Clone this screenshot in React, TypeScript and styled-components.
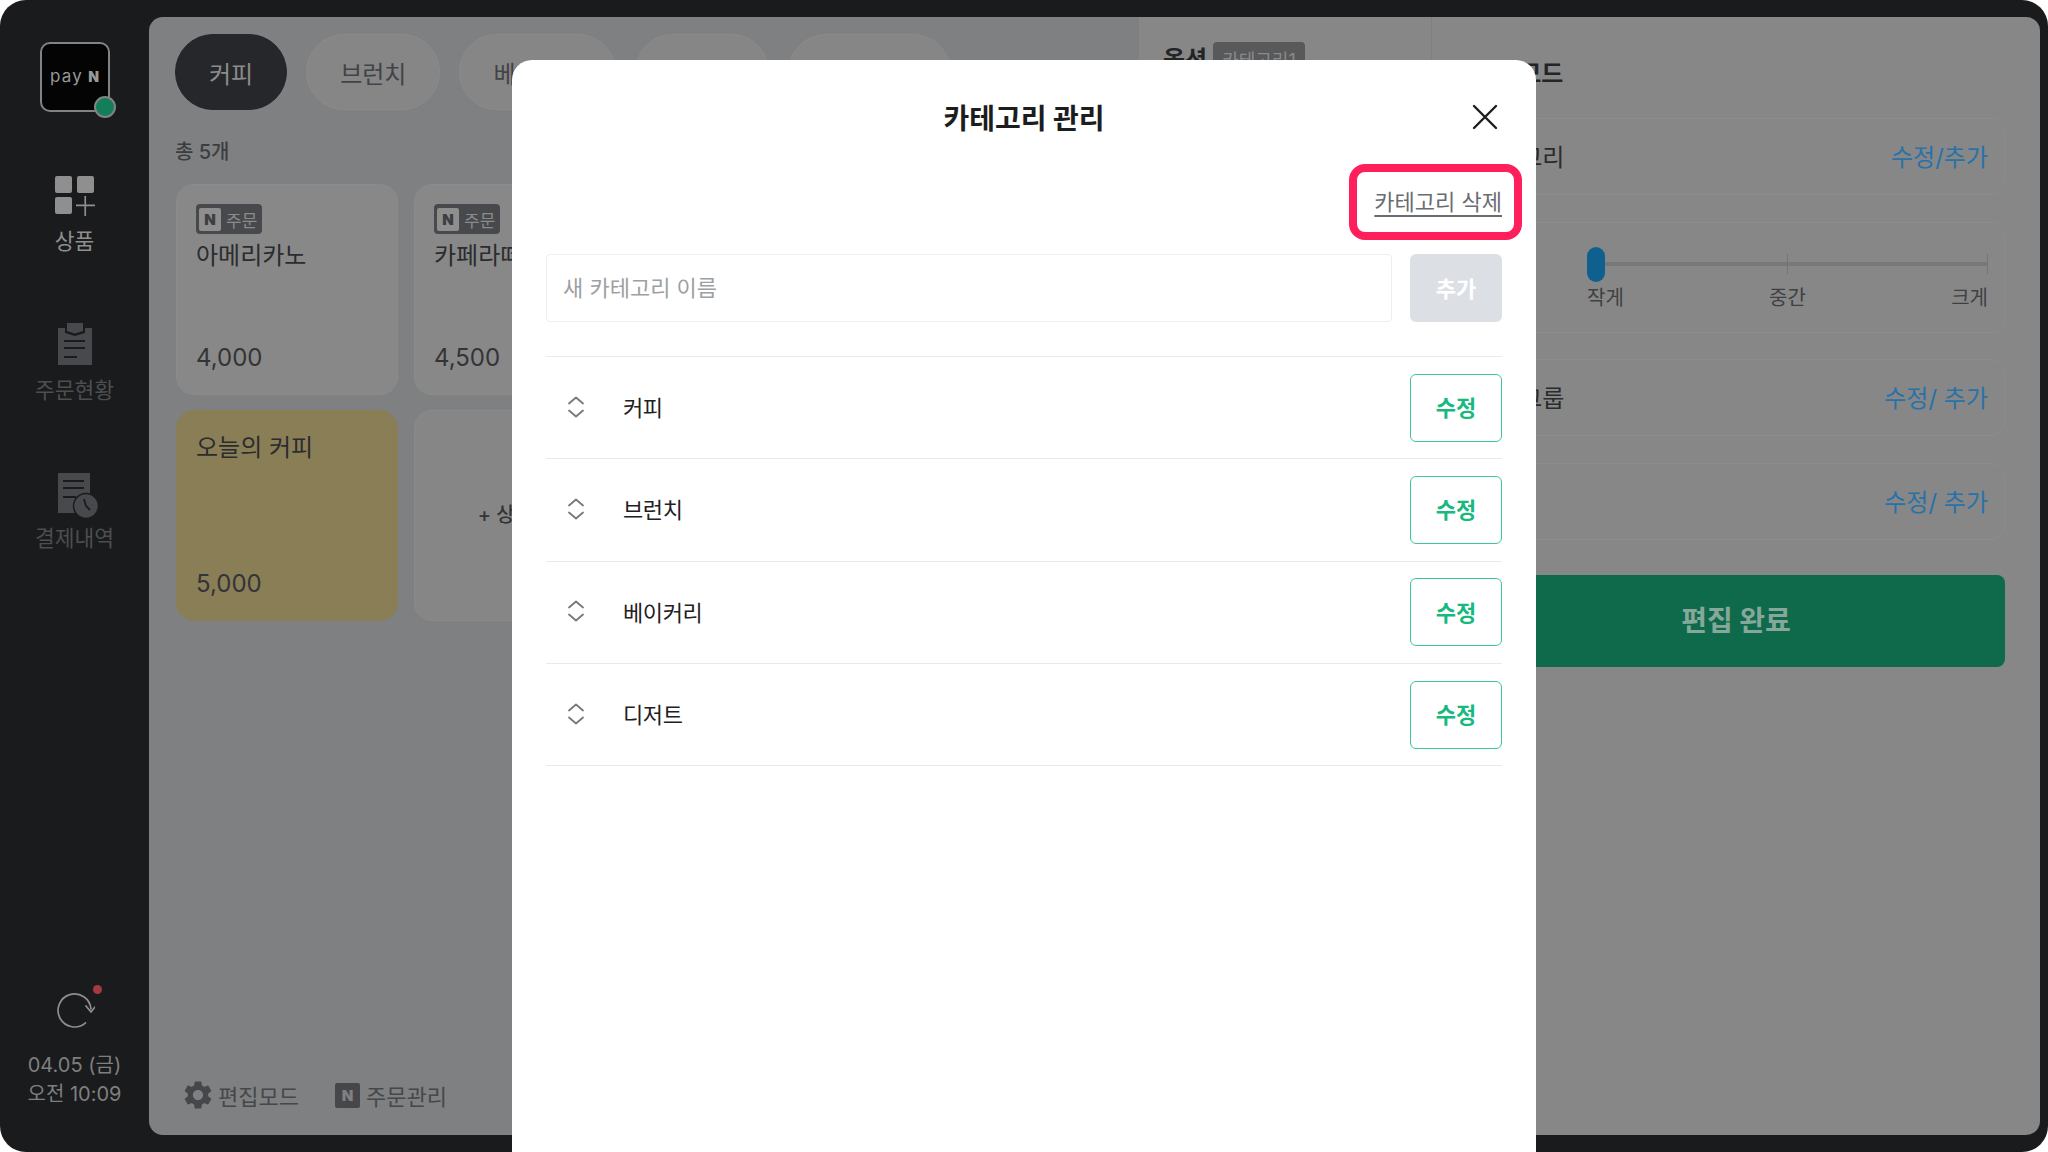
import styled, { createGlobalStyle } from 'styled-components'
import { MdSettings } from 'react-icons/md'

const CATEGORY_NAMES = ['커피', '브런치', '베이커리', '디저트']
const TAB_NAMES = ['커피', '브런치', '베이커리', '디저트', '시즌 메뉴']

const ChevronSortIcon = () => (
  <svg width="18" height="24" viewBox="0 0 18 24" fill="none" stroke="#77787c" strokeWidth="1.8" strokeLinecap="round" strokeLinejoin="round">
    <path d="M2 8.5 9 2.5l7 6" />
    <path d="M2 15.5l7 6 7-6" />
  </svg>
)

const CloseIcon = () => (
  <svg width="26" height="26" viewBox="0 0 26 26" fill="none" stroke="#1c1d1f" strokeWidth="2.4" strokeLinecap="round">
    <path d="M2 2l22 22M24 2 2 24" />
  </svg>
)

const GridPlusIcon = () => (
  <svg width="40" height="40" viewBox="0 0 40 40" fill="#8f8f8f">
    <rect x="0" y="0" width="17" height="17" rx="2" />
    <rect x="22" y="0" width="17" height="17" rx="2" />
    <rect x="0" y="21" width="17" height="17" rx="2" />
    <path d="M29.4 20h1.7v8.6H40v1.7h-8.900V40h-1.700v-9.700H21v-1.700h8.400z" />
  </svg>
)

const ClipboardIcon = () => (
  <svg width="34" height="42" viewBox="0 0 34 42">
    <path fill="#48494c" d="M0 5h7v5l10 3 10-3V5h7v37H0z" />
    <path fill="#48494c" d="M9 0h16v8l-8 2.500L9 8z" />
    <path stroke="#1a1b1d" strokeWidth="1.800" d="M6 18h21M6 25h21M6 34h13" />
  </svg>
)

const ReceiptClockIcon = () => (
  <svg width="41" height="46" viewBox="0 0 41 46">
    <path fill="#48494c" d="M0 0h32v40H0z" />
    <path stroke="#1a1b1d" strokeWidth="1.800" d="M5 8h21M5 15h21M5 24h13" />
    <circle cx="28" cy="33" r="12.500" fill="#48494c" stroke="#1a1b1d" strokeWidth="1.500" />
    <path stroke="#1a1b1d" strokeWidth="1.800" fill="none" d="M26 26l2 7 4 4" />
  </svg>
)

const RefreshIcon = () => (
  <svg width="40" height="40" viewBox="0 0 40 40" fill="none" stroke="#8e8e8e" strokeWidth="1.700" strokeLinecap="round" strokeLinejoin="round">
    <path d="M30.500 32.800A16.500 16.500 0 1 1 36 19" />
    <path d="M31 16l5 6 4-5" />
  </svg>
)

const App = (): React.ReactElement => (
  <>
    <GlobalStyle />
    <Frame>
      <Sidebar>
        <LogoBox>
          <LogoPay>pay</LogoPay>
          <LogoN>N</LogoN>
          <StatusDot />
        </LogoBox>
        <NavItem $top={64}>
          <NavIcon $height={40}>
            <GridPlusIcon />
          </NavIcon>
          <NavLabel $active>상품</NavLabel>
        </NavItem>
        <NavItem $top={67}>
          <NavIcon $height={42}>
            <ClipboardIcon />
          </NavIcon>
          <NavLabel>주문현황</NavLabel>
        </NavItem>
        <NavItem $top={68}>
          <NavIcon $height={46} $indent={8}>
            <ReceiptClockIcon />
          </NavIcon>
          <NavLabel $gap={4}>결제내역</NavLabel>
        </NavItem>
        <SidebarFooter>
          <RefreshButton>
            <RefreshIcon />
            <RedDot />
          </RefreshButton>
          <DateText>04.05 (금)</DateText>
          <DateText>오전 10:09</DateText>
        </SidebarFooter>
      </Sidebar>

      <Panel>
        <MenuColumn>
          <Tabs>
            {TAB_NAMES.map((name, index) => (
              <Tab key={name} $active={index === 0}>
                {name}
              </Tab>
            ))}
          </Tabs>
          <TotalText>총 5개</TotalText>
          <CardGrid>
            <ProductCard>
              <OrderBadge>
                <BadgeN>N</BadgeN>
                주문
              </OrderBadge>
              <CardTitle>아메리카노</CardTitle>
              <CardPrice>4,000</CardPrice>
            </ProductCard>
            <ProductCard>
              <OrderBadge>
                <BadgeN>N</BadgeN>
                주문
              </OrderBadge>
              <CardTitle>카페라떼</CardTitle>
              <CardPrice>4,500</CardPrice>
            </ProductCard>
            <ProductCard $highlight>
              <CardTitle>오늘의 커피</CardTitle>
              <CardPrice>5,000</CardPrice>
            </ProductCard>
            <AddCard>+ 상품 추가</AddCard>
          </CardGrid>
          <MenuFooter>
            <FooterLink>
              <MdSettings size={34} color="#46474a" />
              편집모드
            </FooterLink>
            <FooterLink>
              <FooterN>N</FooterN>
              주문관리
            </FooterLink>
          </MenuFooter>
        </MenuColumn>

        <OptionColumn>
          <OptionTitle>옵션</OptionTitle>
          <OptionTag>카테고리1</OptionTag>
        </OptionColumn>

        <SettingsColumn>
          <SettingsTitle>편집모드</SettingsTitle>
          <SettingsRows>
            <SettingsRow>
              <RowLabel>카테고리</RowLabel>
              <RowLink>수정/추가</RowLink>
            </SettingsRow>
            <SliderRow>
              <RowLabel>크기</RowLabel>
              <Slider>
                <SliderTrack>
                  <SliderTick $position={50} />
                  <SliderTick $position={100} />
                  <SliderThumb />
                </SliderTrack>
                <SliderLabels>
                  <span>작게</span>
                  <span>중간</span>
                  <span>크게</span>
                </SliderLabels>
              </Slider>
            </SliderRow>
            <SettingsRow>
              <RowLabel>옵션그룹</RowLabel>
              <RowLink>수정/ 추가</RowLink>
            </SettingsRow>
            <SettingsRow>
              <RowLabel>옵션</RowLabel>
              <RowLink>수정/ 추가</RowLink>
            </SettingsRow>
          </SettingsRows>
          <DoneButton>편집 완료</DoneButton>
        </SettingsColumn>
      </Panel>

      <Modal>
        <ModalHeader>
          <ModalTitle>카테고리 관리</ModalTitle>
          <CloseButton>
            <CloseIcon />
          </CloseButton>
        </ModalHeader>
        <DeleteRow>
          <DeleteHighlight>
            <DeleteLink>카테고리 삭제</DeleteLink>
          </DeleteHighlight>
        </DeleteRow>
        <AddForm>
          <NameInput placeholder="새 카테고리 이름" />
          <AddButton>추가</AddButton>
        </AddForm>
        <CategoryList>
          {CATEGORY_NAMES.map((name) => (
            <CategoryRow key={name}>
              <DragHandle>
                <ChevronSortIcon />
              </DragHandle>
              <CategoryName>{name}</CategoryName>
              <EditButton>수정</EditButton>
            </CategoryRow>
          ))}
        </CategoryList>
      </Modal>
    </Frame>
  </>
)

export default App

const GlobalStyle = createGlobalStyle`
  html, body {
    margin: 0;
    padding: 0;
    background: #fff;
  }

  * {
    box-sizing: border-box;
  }

  body {
    font-family: Inter, 'Noto Sans CJK KR', sans-serif;
  }
`

const Frame = styled.div`
  position: relative;
  display: flex;
  width: 2048px;
  height: 1152px;
  padding: 17px 8px 17px 0;
  overflow: hidden;
  background: #1a1b1d;
  border-radius: 26px;
`

const Sidebar = styled.aside`
  display: flex;
  flex: 0 0 149px;
  flex-direction: column;
  align-items: center;
`

const LogoBox = styled.div`
  position: relative;
  display: flex;
  align-items: center;
  justify-content: center;
  gap: 5px;
  width: 70px;
  height: 70px;
  margin-top: 25px;
  background: #040404;
  border: 2px solid #838383;
  border-radius: 10px;
`

const LogoPay = styled.span`
  font-size: 17px;
  font-weight: 400;
  letter-spacing: 1.2px;
  color: #989898;
  line-height: 20px;
  padding-bottom: 2px;
`

const LogoN = styled.span`
  font-size: 14px;
  font-weight: 900;
  color: #989898;
  line-height: 20px;
`

const StatusDot = styled.span`
  position: absolute;
  right: -8px;
  bottom: -8px;
  width: 22px;
  height: 22px;
  background: #137e59;
  border: 2px solid #838383;
  border-radius: 50%;
`

const NavItem = styled.div<{ $top: number }>`
  display: flex;
  flex-direction: column;
  align-items: center;
  margin-top: ${(props) => props.$top}px;
`

const NavIcon = styled.div<{ $height: number; $indent?: number }>`
  display: flex;
  align-items: center;
  justify-content: center;
  height: ${(props) => props.$height}px;
  margin-left: ${(props) => props.$indent ?? 0}px;

  svg {
    display: block;
  }
`

const NavLabel = styled.span<{ $active?: boolean; $gap?: number }>`
  margin-top: ${(props) => props.$gap ?? 10}px;
  font-size: 21.5px;
  line-height: 30px;
  color: ${(props) => (props.$active ? '#8f8f8f' : '#4d4e50')};
`

const SidebarFooter = styled.div`
  display: flex;
  flex-direction: column;
  align-items: center;
  margin-top: auto;
  padding-bottom: 26px;
`

const RefreshButton = styled.div`
  position: relative;
  width: 40px;
  height: 40px;
  margin-bottom: 21px;
`

const RedDot = styled.span`
  position: absolute;
  top: -5px;
  right: -7px;
  width: 9px;
  height: 9px;
  background: #a23a3f;
  border-radius: 50%;
`

const DateText = styled.div`
  font-size: 20px;
  line-height: 29px;
  color: #7f7f7f;
  white-space: nowrap;
`

const Panel = styled.main`
  display: flex;
  flex: 1;
  overflow: hidden;
  border-radius: 14px;
`

const MenuColumn = styled.section`
  display: flex;
  flex: 0 0 990px;
  flex-direction: column;
  padding: 17px 0 0 26px;
  background: #7f8081;
`

const Tabs = styled.div`
  display: flex;
  gap: 19px;
`

const Tab = styled.div<{ $active?: boolean }>`
  display: flex;
  align-items: center;
  height: 76px;
  padding: 0 33px;
  font-size: 24px;
  white-space: nowrap;
  color: ${(props) => (props.$active ? '#8c8c8c' : '#424346')};
  background: ${(props) => (props.$active ? '#26272a' : '#868686')};
  border: 1px solid ${(props) => (props.$active ? '#26272a' : '#8b8b8b')};
  border-radius: 38px;
`

const TotalText = styled.div`
  margin-top: 28px;
  font-size: 20px;
  font-weight: 500;
  line-height: 28px;
  color: #3c3d40;
`

const CardGrid = styled.div`
  display: grid;
  grid-template-columns: repeat(2, 222px);
  grid-auto-rows: 211px;
  gap: 15px 16px;
  margin: 18px 0 0 1px;
`

const ProductCard = styled.article<{ $highlight?: boolean }>`
  display: flex;
  flex-direction: column;
  padding: 19px 19px 21px;
  background: ${(props) => (props.$highlight ? '#8a7e57' : '#888888')};
  border: 1px solid ${(props) => (props.$highlight ? '#8a7e57' : '#8b8b8b')};
  border-radius: 18px;
`

const OrderBadge = styled.div`
  display: flex;
  align-items: center;
  gap: 5px;
  align-self: flex-start;
  height: 30px;
  padding: 0 5px 0 3px;
  font-size: 17px;
  color: #8b8b8b;
  background: #48494c;
  border-radius: 4px;
`

const BadgeN = styled.span`
  display: flex;
  align-items: center;
  justify-content: center;
  width: 22px;
  height: 23px;
  font-size: 15px;
  font-weight: 900;
  color: #3d3e41;
  background: #8e8e8e;
  border-radius: 2px;
`

const CardTitle = styled.div`
  margin-top: 5px;
  font-size: 24px;
  line-height: 34px;
  color: #2b2c2e;

  &:first-child {
    margin-top: 1px;
  }
`

const CardPrice = styled.div`
  margin-top: auto;
  font-size: 24px;
  line-height: 30px;
  color: #333437;
`

const AddCard = styled.div`
  display: flex;
  align-items: center;
  justify-content: center;
  padding: 0 0 4px 3px;
  font-size: 20px;
  font-weight: 500;
  color: #333437;
  background: #868686;
  border: 1px solid #8b8b8b;
  border-radius: 18px;
`

const MenuFooter = styled.div`
  display: flex;
  align-items: center;
  gap: 36px;
  margin-top: auto;
  padding: 0 0 23px 6px;
`

const FooterLink = styled.div`
  display: flex;
  align-items: center;
  gap: 3px;
  height: 34px;
  font-size: 22px;
  color: #46474a;
`

const FooterN = styled.span`
  display: flex;
  align-items: center;
  justify-content: center;
  width: 25px;
  height: 25px;
  margin-right: 3px;
  font-size: 15px;
  font-weight: 900;
  color: #808081;
  background: #46474a;
  border-radius: 2px;
`

const OptionColumn = styled.section`
  display: flex;
  flex: 0 0 293px;
  align-items: flex-start;
  gap: 6px;
  padding: 25px 0 0 24px;
  background: #878787;
  border-right: 1px solid #7f7f7f;
`

const OptionTitle = styled.div`
  font-size: 24px;
  font-weight: 700;
  line-height: 36px;
  color: #232425;
`

const OptionTag = styled.div`
  display: flex;
  align-items: center;
  height: 34px;
  padding: 0 9px;
  font-size: 18px;
  color: #8a8a8a;
  background: #58595b;
  border-radius: 4px;
`

const SettingsColumn = styled.section`
  display: flex;
  flex: 1;
  flex-direction: column;
  padding: 40px 35px 0;
  background: #878787;
`

const SettingsTitle = styled.h2`
  margin: 0;
  padding-left: 8px;
  font-size: 24px;
  font-weight: 700;
  line-height: 34px;
  color: #232425;
`

const SettingsRows = styled.div`
  display: flex;
  flex-direction: column;
  gap: 26.5px;
  margin-top: 27px;
`

const SettingsRow = styled.div`
  display: flex;
  align-items: center;
  justify-content: space-between;
  height: 77px;
  padding: 0 16px 0 8px;
  border: 1px solid #8c8c8c;
  border-radius: 14px;
`

const SliderRow = styled(SettingsRow)`
  align-items: flex-start;
  height: 111px;
  padding-top: 24px;
`

const RowLabel = styled.span`
  padding-top: 3px;
  font-size: 24px;
  line-height: 34px;
  color: #2a2b2c;
`

const RowLink = styled.span`
  padding-top: 3px;
  font-size: 24px;
  line-height: 34px;
  color: #2872a8;
`

const Slider = styled.div`
  width: 401px;
`

const SliderTrack = styled.div`
  position: relative;
  height: 35px;

  &::before {
    content: '';
    position: absolute;
    top: 15px;
    left: 0;
    right: 0;
    height: 4px;
    background: #787878;
  }
`

const SliderTick = styled.span<{ $position: number }>`
  position: absolute;
  top: 7px;
  left: calc(${(props) => props.$position}% - 1px);
  width: 1px;
  height: 20px;
  background: #747474;
`

const SliderThumb = styled.span`
  position: absolute;
  top: 0;
  left: 0;
  width: 18px;
  height: 35px;
  background: #10608f;
  border-radius: 9px;
`

const SliderLabels = styled.div`
  display: flex;
  justify-content: space-between;
  margin-top: 4px;
  font-size: 20px;
  line-height: 24px;
  color: #3f4042;
`

const DoneButton = styled.div`
  display: flex;
  align-items: center;
  justify-content: center;
  height: 92px;
  margin-top: 35px;
  padding-bottom: 3px;
  font-size: 28px;
  font-weight: 700;
  color: #85a89a;
  background: #0f6a4b;
  border-radius: 8px;
`

const Modal = styled.div`
  position: absolute;
  top: 60px;
  left: 512px;
  display: flex;
  flex-direction: column;
  width: 1024px;
  height: 1120px;
  padding: 0 34px;
  background: #fff;
  border-radius: 20px;
`

const ModalHeader = styled.header`
  position: relative;
  display: flex;
  align-items: center;
  justify-content: center;
  height: 117px;
`

const ModalTitle = styled.h1`
  margin: 0;
  font-size: 28px;
  font-weight: 700;
  line-height: 40px;
  color: #1c1d1f;
`

const CloseButton = styled.div`
  position: absolute;
  top: 44px;
  right: 4px;
  width: 26px;
  height: 26px;

  svg {
    display: block;
  }
`

const DeleteRow = styled.div`
  display: flex;
  justify-content: flex-end;
  height: 77px;
  margin: -13px -20px 0 0;
`

const DeleteHighlight = styled.div`
  display: flex;
  align-items: center;
  justify-content: flex-end;
  width: 173px;
  height: 76px;
  padding-right: 12px;
  border: 8px solid #ff1f5a;
  border-radius: 16px;
`

const DeleteLink = styled.span`
  font-size: 22px;
  line-height: 28px;
  color: #6b6c70;
  text-decoration: underline;
  text-underline-offset: 5px;
  text-decoration-thickness: 1.5px;
  white-space: nowrap;
`

const AddForm = styled.div`
  display: flex;
  gap: 18px;
  height: 68px;
  margin-top: 13px;
`

const NameInput = styled.input`
  flex: 1;
  min-width: 0;
  padding: 0 16px;
  font-family: inherit;
  font-size: 22px;
  color: #1c1d1f;
  background: #fff;
  border: 1px solid #eceef0;
  border-radius: 4px;
  outline: none;

  &::placeholder {
    color: #9d9fa3;
  }
`

const AddButton = styled.div`
  display: flex;
  flex: 0 0 92px;
  align-items: center;
  justify-content: center;
  padding-bottom: 2px;
  font-size: 22px;
  font-weight: 700;
  color: #fff;
  background: #dcdfe4;
  border-radius: 6px;
`

const CategoryList = styled.div`
  margin-top: 34px;
  border-top: 1px solid #e9eaec;
`

const CategoryRow = styled.div`
  display: flex;
  align-items: center;
  height: 102.3px;
  border-bottom: 1px solid #e9eaec;
`

const DragHandle = styled.div`
  display: flex;
  flex: 0 0 77px;
  padding: 0 0 2px 21px;

  svg {
    display: block;
  }
`

const CategoryName = styled.span`
  flex: 1;
  padding-bottom: 3px;
  font-size: 22px;
  letter-spacing: -0.4px;
  color: #1f2023;
`

const EditButton = styled.div`
  display: flex;
  flex: 0 0 92px;
  align-items: center;
  justify-content: center;
  height: 68px;
  padding-bottom: 3px;
  font-size: 22px;
  font-weight: 700;
  color: #17b97e;
  background: #fff;
  border: 1.5px solid #3cc79a;
  border-radius: 6px;
`
